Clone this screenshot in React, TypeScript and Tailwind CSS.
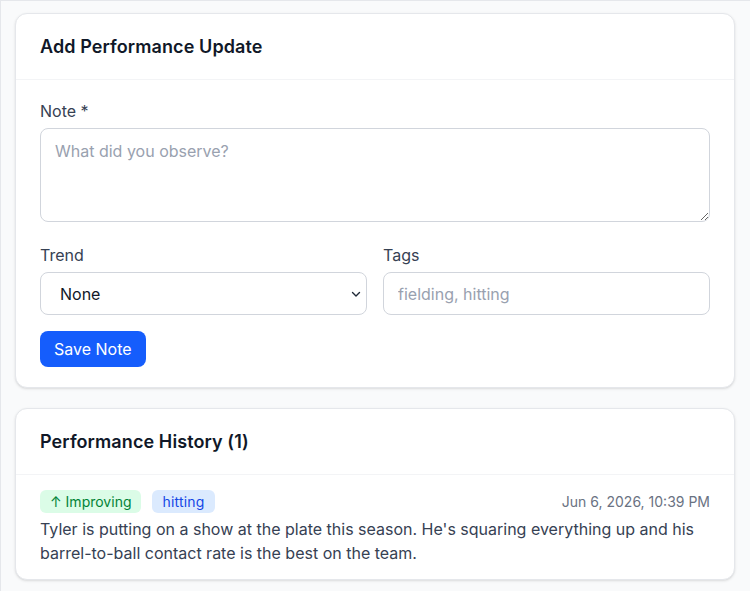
import React from "react";

export default function App() {
  return (
    <div
      className="min-h-[591px] bg-gray-50 border-t border-l border-gray-200 pl-[14px] pr-[15px] pt-[12px] pb-4 flex flex-col gap-5"
      style={{ fontFamily: "Inter, 'Noto Sans', sans-serif" }}
    >
      <div className="bg-white border border-gray-200 rounded-xl shadow-sm">
        <div className="h-[66px] px-6 flex items-center border-b border-gray-100">
          <h2 className="text-lg font-semibold text-gray-900 tracking-[0.1px]">Add Performance Update</h2>
        </div>
        <div className="px-6 pt-[19px] pb-5">
          <label className="block text-base leading-6 text-gray-700 mb-[5px]">Note *</label>
          <textarea
            rows={3}
            placeholder="What did you observe?"
            className="block w-full h-[94px] rounded-lg border border-gray-300 px-[14px] py-2.5 text-base leading-6 text-gray-900 placeholder:text-gray-400 outline-none"
          />
          <div className="mt-[21px] grid grid-cols-2 gap-4">
            <div>
              <label className="block text-base leading-6 text-gray-700 mb-[5px]">Trend</label>
              <div className="relative">
                <select className="block w-full h-[43px] appearance-none rounded-lg border border-gray-300 bg-white pl-[19px] pr-8 text-base text-gray-900 outline-none">
                  <option>None</option>
                  <option>Improving</option>
                  <option>Declining</option>
                </select>
                <svg
                  className="absolute right-[5px] top-1/2 -translate-y-1/2 pointer-events-none"
                  width="12"
                  height="12"
                  viewBox="0 0 12 12"
                  fill="none"
                >
                  <path d="M2.5 4.5L6 8L9.5 4.5" stroke="#1f2937" strokeWidth="1.4" strokeLinecap="round" strokeLinejoin="round" />
                </svg>
              </div>
            </div>
            <div>
              <label className="block text-base leading-6 text-gray-700 mb-[5px]">Tags</label>
              <input
                placeholder="fielding, hitting"
                className="block w-full h-[43px] rounded-lg border border-gray-300 bg-white px-[14px] text-base text-gray-900 placeholder:text-gray-400 outline-none"
              />
            </div>
          </div>
          <button className="mt-4 h-9 px-[14px] rounded-lg bg-blue-600 text-white text-base">Save Note</button>
        </div>
      </div>

      <div className="bg-white border border-gray-200 rounded-xl shadow-sm">
        <div className="h-[66px] px-6 flex items-center border-b border-gray-100">
          <h2 className="text-lg font-semibold text-gray-900 tracking-[0.1px]">Performance History (1)</h2>
        </div>
        <div className="px-6 pt-[15px] pb-3.5">
          <div className="flex items-center justify-between">
            <div className="flex items-center gap-[11px]">
              <span className="inline-flex items-center h-[23px] px-2.5 rounded-md bg-green-100 text-green-700 text-sm">
                ↑ Improving
              </span>
              <span className="inline-flex items-center h-[23px] px-2.5 rounded-md bg-blue-100 text-blue-700 text-sm tracking-[0.2px]">
                hitting
              </span>
            </div>
            <span className="text-sm text-gray-500">Jun 6, 2026, 10:39 PM</span>
          </div>
          <p className="mt-1 text-base leading-6 text-gray-700">
            Tyler is putting on a show at the plate this season. He's squaring everything up and his barrel-to-ball contact rate is the best on the team.
          </p>
        </div>
      </div>
    </div>
  );
}
